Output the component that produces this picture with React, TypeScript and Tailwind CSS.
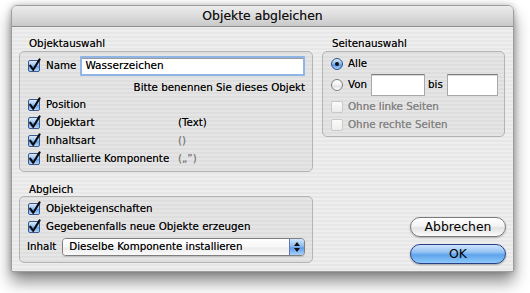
import React from "react";

const font = "font-['DejaVu_Sans',sans-serif]";

function Checkbox({ disabled }: { disabled?: boolean }) {
  if (disabled) {
    return (
      <span className="w-[12px] h-[12px] shrink-0 rounded-[2px] border border-[#c9c9c9] bg-[linear-gradient(180deg,#fbfbfb,#ececec)]" />
    );
  }
  return (
    <span className="relative w-[12px] h-[12px] shrink-0 rounded-[2px] border border-[#3a5890] bg-[linear-gradient(180deg,#dceafb_0%,#99c2f1_45%,#6aa3e9_55%,#b4d6fb_100%)]">
      <svg className="absolute left-0 top-0 overflow-visible" width="12" height="12" viewBox="0 0 12 12">
        <path d="M1.2 4.6 L4.2 8.8 L10.6 -1.6" stroke="#0b0b0b" strokeWidth="2.1" fill="none" strokeLinecap="round" strokeLinejoin="round" />
      </svg>
    </span>
  );
}

function Radio({ on }: { on?: boolean }) {
  if (on) {
    return (
      <span className="w-[12px] h-[12px] shrink-0 rounded-full border border-[#34538c] bg-[linear-gradient(180deg,#d8e8fb_0%,#8fbcef_45%,#5b98e6_60%,#a9d0fb_100%)] flex items-center justify-center">
        <span className="w-[4px] h-[4px] rounded-full bg-[#111]" />
      </span>
    );
  }
  return (
    <span className="w-[12px] h-[12px] shrink-0 rounded-full border border-[#7d7d7d] bg-[linear-gradient(180deg,#ffffff_0%,#f2f2f2_50%,#e2e2e2_60%,#ffffff_100%)]" />
  );
}

function CheckRow({ label, value, gray }: { label: string; value?: string; gray?: boolean }) {
  return (
    <div className="h-[18px] flex items-center">
      <Checkbox />
      <span className="ml-[6px] w-[132px] whitespace-nowrap">{label}</span>
      {value && <span className={gray ? "text-[#8a8a8a]" : "text-black"}>{value}</span>}
    </div>
  );
}

function TextField({ w, value, focus }: { w: string; value?: string; focus?: boolean }) {
  return (
    <div
      className={
        focus
          ? `${w} h-[20px] rounded-[1px] border-2 border-[#8fb4e6] bg-white flex items-center shadow-[inset_0_1px_0_#9c9c9c]`
          : `${w} h-[22px] border border-[#a8a8a8] border-t-[#7e7e7e] bg-white shadow-[inset_0_1px_0_#d8d8d8]`
      }
    >
      {value && <span className="pl-[3px] text-[10.5px]">{value}</span>}
    </div>
  );
}

const groupBox = "rounded-[5px] border border-[#b3b3b3] bg-[rgba(0,0,0,0.035)]";

export default function App() {
  return (
    <div className={`w-[530px] h-[293px] bg-white pt-[5px] pl-[11px] text-[10.3px] text-black [text-shadow:0_0_0.4px_rgba(0,0,0,0.55)] ${font}`}>
      <div className="w-[503px] h-[267px] flex flex-col rounded-t-[6px] border border-[#9d9d9d] shadow-[0_10px_16px_rgba(0,0,0,0.45),0_0_6px_rgba(0,0,0,0.25)] bg-[repeating-linear-gradient(180deg,#eeeeee_0px,#eeeeee_2px,#e7e7e7_2px,#e7e7e7_4px)] overflow-hidden">
        {/* Title bar */}
        <div className="h-[21px] shrink-0 flex items-center justify-center border-b border-[#8c8c8c] bg-[linear-gradient(180deg,#ececec_0%,#dcdcdc_50%,#c9c9c9_100%)] text-[12.4px] text-[#111]">
          Objekte abgleichen
        </div>

        {/* Body */}
        <div className="flex pl-[7px] pt-[9px]">
          {/* Left column */}
          <div className="w-[294px] flex flex-col">
            <div className="h-[14px] pl-[10px] leading-[14px] mb-[1px]">Objektauswahl</div>
            <div className={`${groupBox} h-[121px] pl-[8px] pr-[7px] pt-[4px]`}>
              <div className="h-[20px] flex items-center">
                <Checkbox />
                <span className="ml-[6px] mr-[4px]">Name</span>
                <TextField w="flex-1" value="Wasserzeichen" focus />
              </div>
              <div className="mt-[4px] h-[14px] leading-[14px] text-right">Bitte benennen Sie dieses Objekt</div>
              <div className="mt-[2px]">
                <CheckRow label="Position" />
                <CheckRow label="Objektart" value="(Text)" />
                <CheckRow label="Inhaltsart" value="()" gray />
                <CheckRow label="Installierte Komponente" value="(„”)" gray />
              </div>
            </div>

            <div className="mt-[10px] h-[14px] pl-[10px] leading-[14px]">Abgleich</div>
            <div className={`${groupBox} h-[67px] pl-[8px] pr-[7px] pt-[3px]`}>
              <div className="h-[18px] flex items-center">
                <Checkbox />
                <span className="ml-[6px]">Objekteigenschaften</span>
              </div>
              <div className="h-[18px] flex items-center">
                <Checkbox />
                <span className="ml-[6px]">Gegebenenfalls neue Objekte erzeugen</span>
              </div>
              <div className="mt-[2px] h-[18px] flex items-center -ml-[1px]">
                <span className="mr-[6px]">Inhalt</span>
                <div className="flex-1 h-[18px] flex rounded-[4px] border border-[#7f7f7f] overflow-hidden shadow-[0_1px_1px_rgba(0,0,0,0.15)]">
                  <div className="flex-1 flex items-center pl-[6px] bg-[linear-gradient(180deg,#ffffff_0%,#f7f7f7_50%,#ececec_55%,#fafafa_100%)]">
                    Dieselbe Komponente installieren
                  </div>
                  <div className="w-[15px] flex flex-col items-center justify-center gap-[2px] border-l border-[#5a79b3] bg-[linear-gradient(180deg,#d2e5fb_0%,#8ebcf0_45%,#5f9de8_55%,#a8d0fb_100%)]">
                    <svg width="6" height="4" viewBox="0 0 6 4"><path d="M0 4 L3 0 L6 4 Z" fill="#111" /></svg>
                    <svg width="6" height="4" viewBox="0 0 6 4"><path d="M0 0 L3 4 L6 0 Z" fill="#111" /></svg>
                  </div>
                </div>
              </div>
            </div>
          </div>

          {/* Right column */}
          <div className="ml-[9px] w-[183px] flex flex-col">
            <div className="h-[14px] pl-[10px] leading-[14px] mb-[1px]">Seitenauswahl</div>
            <div className={`${groupBox} h-[86px] pl-[8px] pt-[3px]`}>
              <div className="h-[18px] flex items-center">
                <Radio on />
                <span className="ml-[5px]">Alle</span>
              </div>
              <div className="mt-[1px] h-[22px] flex items-center">
                <Radio />
                <span className="ml-[5px] mr-[4px]">Von</span>
                <TextField w="w-[54px]" />
                <span className="ml-[3px] mr-[4px]">bis</span>
                <TextField w="w-[51px]" />
              </div>
              <div className="mt-[2px] h-[18px] flex items-center text-[#8a8a8a]">
                <Checkbox disabled />
                <span className="ml-[5px]">Ohne linke Seiten</span>
              </div>
              <div className="h-[18px] flex items-center text-[#8a8a8a]">
                <Checkbox disabled />
                <span className="ml-[5px]">Ohne rechte Seiten</span>
              </div>
            </div>

            <div className="mt-[80px] flex flex-col items-end -mr-[1px]">
              <button className="w-[96px] h-[20px] rounded-full border border-[#7a7a7a] text-[12.4px] leading-none bg-[linear-gradient(180deg,#ffffff_0%,#f3f3f3_45%,#e2e2e2_55%,#fbfbfb_100%)] shadow-[0_1px_2px_rgba(0,0,0,0.25)]">
                Abbrechen
              </button>
              <button className="mt-[7px] w-[96px] h-[20px] rounded-full border border-[#2c3f86] text-[12.4px] leading-none bg-[linear-gradient(180deg,#cfe4fc_0%,#93c2f3_40%,#5fa3ec_55%,#8ccaf9_100%)] shadow-[0_1px_2px_rgba(0,0,0,0.3)]">
                OK
              </button>
            </div>
          </div>
        </div>
      </div>
    </div>
  );
}
